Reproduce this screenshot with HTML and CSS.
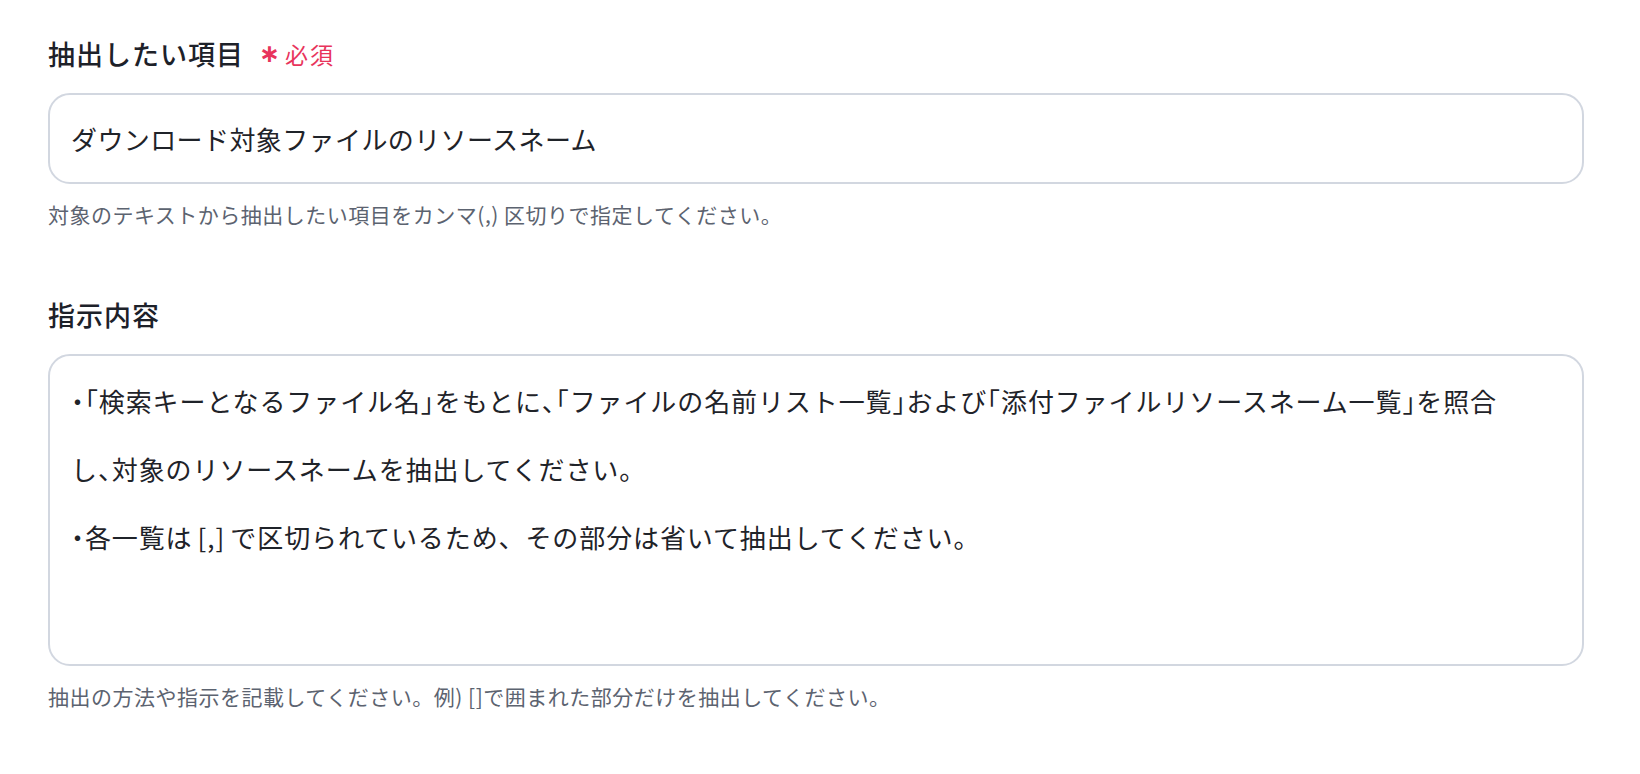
FILE: index.html
```html
<!DOCTYPE html>
<html lang="ja">
<head>
<meta charset="utf-8">
<title>抽出設定</title>
<link rel="stylesheet" href="styles.css">
</head>
<body>
<main class="form">
  <section class="field">
    <div class="label-row">
      <span class="label">抽出したい項目</span>
      <span class="required"><span class="req-mark">∗</span>必須</span>
    </div>
    <div class="input">ダウンロード対象ファイルのリソースネーム</div>
    <p class="hint">対象のテキストから抽出したい項目をカンマ(,) 区切りで指定してください。</p>
  </section>
  <section class="field">
    <div class="label-row">
      <span class="label">指示内容</span>
    </div>
    <div class="textarea">
      <p class="ta-line"><span class="half">・「</span>検索キーとなるファイル名<span class="half">」</span>をもとに<span class="half">、「</span>ファイルの名前リスト一覧<span class="half">」</span>および<span class="half">「</span>添付ファイルリソースネーム一覧<span class="half">」</span>を照合<br>し<span class="half">、</span>対象のリソースネームを抽出してください。</p>
      <p class="ta-line"><span class="half">・</span>各一覧は<span class="brackets">[,]</span>で区切られているため、その部分は省いて抽出してください。</p>
    </div>
    <p class="hint">抽出の方法や指示を記載してください。例) []で囲まれた部分だけを抽出してください。</p>
  </section>
</main>
</body>
</html>
```

FILE: styles.css
```css
* { box-sizing: border-box; }
html, body { margin: 0; padding: 0; background: #ffffff; }
body {
  font-family: "Noto Sans CJK JP", "Noto Sans", sans-serif;
  color: #1f2329;
}
.form {
  width: 1536px;
  margin-left: 48px;
  padding-top: 36px;
}
.field + .field { margin-top: 69px; }
.label-row {
  display: flex;
  align-items: center;
  height: 36px;
}
.label {
  font-size: 27px;
  font-weight: 500;
  line-height: 36px;
  letter-spacing: 1px;
  color: #1d2129;
}
.required {
  display: flex;
  align-items: center;
  margin-left: 15px;
  color: #e8345c;
  font-size: 23px;
  line-height: 36px;
  letter-spacing: 2px;
}
.req-mark {
  font-family: "DejaVu Sans", sans-serif;
  font-weight: 700;
  font-size: 25px;
  letter-spacing: 0;
  margin-right: 5px;
}
.input {
  margin-top: 21px;
  height: 91px;
  border: 2px solid #d2d7e0;
  border-radius: 22px;
  padding: 0 21px;
  display: flex;
  align-items: center;
  font-size: 26px;
  line-height: 36px;
  letter-spacing: 0.4px;
  color: #1f2329;
}
.textarea {
  margin-top: 21px;
  height: 312px;
  border: 2px solid #d2d7e0;
  border-radius: 22px;
  padding: 11px 21px 0;
  font-size: 26px;
  line-height: 68px;
  letter-spacing: 0.9px;
  color: #1f2329;
}
.ta-line { margin: 0; }
.half { font-feature-settings: "halt"; }
.brackets { letter-spacing: 1px; margin: 0 5px; }
.hint {
  margin: 16px 0 0;
  font-size: 21px;
  line-height: 28px;
  letter-spacing: 0.5px;
  color: #5c6370;
}
```
